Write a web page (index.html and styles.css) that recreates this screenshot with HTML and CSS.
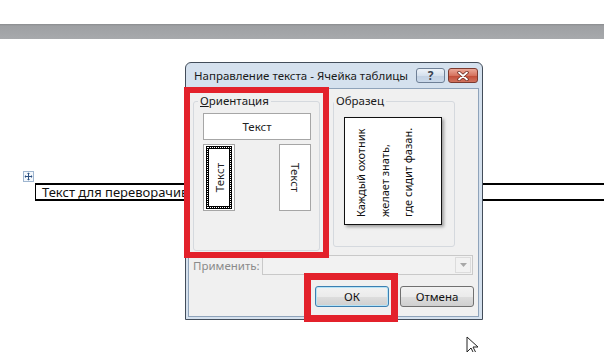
FILE: index.html
```html
<!DOCTYPE html>
<html lang="ru">
<head>
    <meta charset="UTF-8">
    <meta name="viewport" content="width=device-width, initial-scale=1.0">
    <title>Направление текста</title>
    <link rel="stylesheet" href="styles.css">
</head>
<body>
    <div class="ribbon-edge"></div>

    <div class="page">
        <svg class="table-handle" width="11" height="11" viewBox="0 0 11 11">
            <rect x="0.5" y="0.5" width="10" height="10" fill="#f4f8fc" stroke="#9fb6d0"/>
            <path d="M5.5 2v7M2 5.5h7" stroke="#2b4f80" stroke-width="1"/>
            <path d="M5.5 1.5l-1.5 1.5h3zM5.5 9.5l-1.5-1.5h3zM1.5 5.5l1.5-1.5v3zM9.5 5.5l-1.5-1.5v3z" fill="#2b4f80"/>
        </svg>
        <div class="doc-table">
            <div class="cell">Текст для переворачивания</div>
        </div>
    </div>

    <!-- dialog window over the document -->
    <div class="dialog">
        <div class="titlebar">
            <span class="title">Направление текста - Ячейка таблицы</span>
            <div class="caption-btns">
                <span class="cbtn help">?</span>
                <span class="cbtn close">
                    <svg width="12" height="10" viewBox="0 0 12 10">
                        <path d="M2 1.5l8 7M10 1.5l-8 7" stroke="#6b2a22" stroke-width="3.4" stroke-linecap="round"/>
                        <path d="M2 1.5l8 7M10 1.5l-8 7" stroke="#fff" stroke-width="1.8" stroke-linecap="round"/>
                    </svg>
                </span>
            </div>
        </div>
        <div class="client">
            <div class="groups">
                <fieldset class="group orient">
                    <legend><u>О</u>риентация</legend>
                    <div class="opt opt-h">Текст</div>
                    <div class="vert-row">
                        <div class="opt opt-v">
                            <div class="focus"><span class="up">Текст</span></div>
                        </div>
                        <div class="opt opt-v">
                            <span class="down">Текст</span>
                        </div>
                    </div>
                </fieldset>
                <fieldset class="group sample">
                    <legend>Образец</legend>
                    <div class="sample-page">
                        <div class="sample-text">
                            <p>Каждый охотник</p>
                            <p>желает знать,</p>
                            <p>где сидит фазан.</p>
                        </div>
                    </div>
                </fieldset>
            </div>
            <div class="apply-row">
                <label>Применить:</label>
                <div class="combo">
                    <span class="combo-arrow">
                        <svg width="7" height="4" viewBox="0 0 7 4"><path d="M0 0h7L3.5 4z" fill="#a8a8a8"/></svg>
                    </span>
                </div>
            </div>
            <div class="btn-row">
                <button class="btn default">ОК</button>
                <button class="btn">Отмена</button>
            </div>
        </div>
    </div>

    <!-- red annotation frames -->
    <div class="mark mark-orient"></div>
    <div class="mark mark-ok"></div>

    <svg class="cursor" width="12" height="18" viewBox="0 0 12 18">
        <path d="M1 1v15l4-4 3 6 2-1-3-6h5z" fill="#fff" stroke="#222" stroke-width="1"/>
    </svg>
</body>
</html>
```

FILE: styles.css
```css
body {
    margin: 0;
    width: 604px;
    height: 352px;
    overflow: hidden;
    position: relative;
    background: #fff;
    font-family: "Noto Sans", "Open Sans", sans-serif;
}
.ribbon-edge {
    margin-top: 24px;
    height: 15px;
    background: linear-gradient(#8a8c8e 0, #9ea0a3 2px, #a7a9ac 100%);
}
.page {
    padding: 132px 0 0 23px;
}
.table-handle {
    display: block;
}
.doc-table {
    margin: 1px 0 0 12px;
    width: 569px;
    border: 1px solid #000;
    border-right: none;
    border-top-width: 2px;
    border-bottom-width: 2px;
    overflow: hidden;
}
.cell {
    height: 14px;
    padding-left: 6px;
    font-size: 13px;
    line-height: 14px;
    color: #111;
    white-space: nowrap;
}

/* dialog */
.dialog {
    position: absolute;
    left: 185px;
    top: 62px;
    width: 298px;
    height: 258px;
    box-sizing: border-box;
    border: 1px solid #434d5a;
    border-radius: 6px 6px 0 0;
    background: #d5e1ee;
    padding: 0 3px 2px 2px;
    display: flex;
    flex-direction: column;
}
.titlebar {
    height: 25px;
    display: flex;
    justify-content: space-between;
    align-items: flex-start;
}
.title {
    margin: 5px 0 0 6px;
    font-size: 11.5px;
    color: #1a1a1a;
}
.caption-btns {
    display: flex;
    gap: 3px;
    margin-top: 5px;
    margin-right: 1px;
}
.cbtn {
    width: 27px;
    height: 13px;
    border: 1px solid #6e7f96;
    border-radius: 3px;
    display: flex;
    align-items: center;
    justify-content: center;
}
.help {
    background: linear-gradient(#eef3f9 0, #d6e1ee 50%, #c2d1e3 51%, #cbd9ea 100%);
    font-size: 12px;
    font-weight: bold;
    color: #3b4350;
    line-height: 13px;
}
.close {
    width: 28px;
    border-color: #7c3a30;
    background: linear-gradient(#eba898 0, #d6735f 50%, #c24a35 51%, #d0735f 100%);
}
.close svg {
    display: block;
}
.client {
    flex: 1;
    border: 1px solid #8fa3ba;
    background: #f0f0f0;
    padding: 5px 4px 0 4px;
    font-size: 11.5px;
    color: #1a1a1a;
}
.groups {
    display: flex;
    gap: 13px;
}
.group {
    margin: 0;
    min-width: 0;
    border: 1px solid #d5d9de;
    border-radius: 3px;
    padding: 0;
}
.group legend {
    padding: 0 2px;
    line-height: 14px;
}
.orient {
    width: 127px;
    box-sizing: border-box;
    height: 157px;
    padding: 5px 0 0 9px;
}
.orient legend {
    margin-left: -5px;
}
.opt {
    box-sizing: border-box;
    background: #fff;
    border: 1px solid #a6a6a6;
    color: #222;
    display: flex;
    align-items: center;
    justify-content: center;
}
.opt-h {
    width: 108px;
    height: 27px;
}
.vert-row {
    margin-top: 4px;
    width: 108px;
    display: flex;
    justify-content: space-between;
}
.opt-v {
    width: 32px;
    height: 67px;
}
.focus {
    box-sizing: border-box;
    width: 26px;
    height: 63px;
    border: 3px solid #000;
    outline: 1px dotted #fff;
    outline-offset: -2px;
    display: flex;
    align-items: center;
    justify-content: center;
}
.up {
    writing-mode: vertical-rl;
    transform: rotate(180deg);
}
.down {
    writing-mode: vertical-rl;
}
.sample {
    width: 122px;
    box-sizing: border-box;
    height: 153px;
    padding: 9px 0 0 10px;
}
.sample legend {
    margin-left: -10px;
}
.sample-page {
    box-sizing: border-box;
    width: 98px;
    height: 108px;
    background: #fff;
    border: 1px solid #111;
    box-shadow: 2px 2px 3px rgba(0, 0, 0, 0.35);
    padding: 6px 0 7px 4px;
}
.sample-text {
    height: 100%;
    writing-mode: vertical-rl;
    transform: rotate(180deg);
    font-size: 11px;
    line-height: 23.5px;
    color: #111;
    white-space: nowrap;
}
.sample-text p {
    margin: 0;
}
.apply-row {
    display: flex;
    align-items: center;
    margin-top: 4px;
}
.apply-row label {
    width: 69px;
    color: #8b8b8b;
}
.combo {
    box-sizing: border-box;
    width: 211px;
    height: 20px;
    border: 1px solid #c9c9c9;
    background: #f2f2f2;
    display: flex;
    justify-content: flex-end;
    padding: 1px;
}
.combo-arrow {
    width: 14px;
    border: 1px solid #dcdcdc;
    display: flex;
    align-items: center;
    justify-content: center;
}
.btn-row {
    display: flex;
    justify-content: flex-end;
    gap: 11px;
    margin-top: 11px;
}
.btn {
    box-sizing: border-box;
    width: 74px;
    height: 21px;
    padding: 0;
    border: 1px solid #707070;
    border-radius: 3px;
    background: linear-gradient(#f2f2f2 0, #ebebeb 50%, #dddddd 51%, #cfcfcf 100%);
    font-family: inherit;
    font-size: 11.5px;
    color: #111;
}
.btn.default {
    border-color: #3c7fb1;
    box-shadow: inset 0 0 0 1px #b6e3f6;
}

/* annotations */
.mark {
    position: absolute;
    box-sizing: border-box;
    border: 6px solid #e3212b;
}
.mark-orient {
    left: 184px;
    top: 87px;
    width: 145px;
    height: 171px;
}
.mark-ok {
    left: 304px;
    top: 273px;
    width: 94px;
    height: 49px;
    border-width: 7px;
}
.cursor {
    position: absolute;
    left: 466px;
    top: 336px;
}
```
